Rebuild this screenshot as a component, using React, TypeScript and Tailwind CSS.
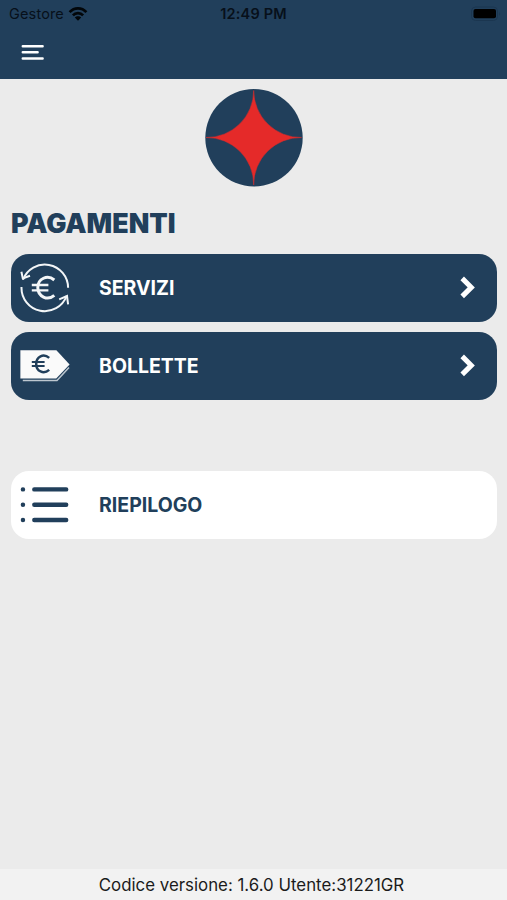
import type { ReactNode } from "react";

function WifiIcon() {
  return (
    <svg className="h-[16px] w-[20px]" viewBox="0 0 20 16" fill="none" stroke="#020609" strokeWidth="2.6">
      <path d="M1.6 6.2C6.2 1.1 13.8 1.1 18.4 6.2" />
      <path d="M4.9 9.4C7.6 6.4 12.4 6.4 15.1 9.4" />
      <path d="M10 14.7 6.8 11.5C8.5 9.8 11.5 9.8 13.2 11.5Z" fill="#020609" stroke="none" />
    </svg>
  );
}

function BatteryIcon() {
  return (
    <svg className="h-[16px] w-[32px]" viewBox="0 0 32 16">
      <rect x="1.5" y="1" width="26" height="13.5" rx="4" fill="none" stroke="#1b3650" />
      <rect x="3.5" y="3" width="22.5" height="9.3" rx="2" fill="#000" />
      <path d="M29.2 5.5Q30.8 7.7 29.2 10Z" fill="#1b3650" />
    </svg>
  );
}

function Logo() {
  return (
    <svg className="h-[98px] w-[98px]" viewBox="0 0 98 98">
      <circle cx="49" cy="48.8" r="48.7" fill="#213f5b" />
      <path
        d="M48.7 1.5A47 47 0 0 0 96.5 48.5A47 47 0 0 0 48.7 96A47 47 0 0 0 1 48.5A47 47 0 0 0 48.7 1.5Z"
        fill="#e52a29"
        stroke="#e52a29"
        strokeWidth="0.5"
      />
    </svg>
  );
}

function ServicesIcon() {
  return (
    <svg className="h-[50px] w-[50px]" viewBox="0 0 50 50" fill="none" stroke="#f3f6f8" strokeWidth="2">
      <path d="M48.1 24.8A23.3 23.3 0 0 0 3 16.6" />
      <path d="M1.5 24A23.3 23.3 0 0 0 46.6 33" />
      <path d="M1.4 8.7 2.8 15.5 10 12.7M39.2 36.3 47 33 48.1 41.3" />
      <path d="M34.3 17C27.5 11.3 17.8 15.5 17.8 24.6S27.5 38.2 34.3 32.4" strokeWidth="3" />
      <path d="M11.8 22H28.4M11.8 27.3H28.4" strokeWidth="2.3" />
    </svg>
  );
}

function BillsIcon() {
  return (
    <svg className="h-[50px] w-[50px]" viewBox="0 0 50 50">
      <path d="M2.8 39.4H37L49 26.6" fill="none" stroke="#bdc7d0" strokeWidth="1.5" />
      <path d="M.4 9.2H36.4L49.6 23.4 36.2 37.6H.4Z" fill="#fafafa" />
      <g fill="none" stroke="#213f5b">
        <path d="M29.2 16.9C23.5 12 16.2 15.6 16.2 22.9S23.5 33.8 29.2 28.9" strokeWidth="2.5" />
        <path d="M11.8 21H24.6M11.8 25H24.6" strokeWidth="1.8" />
      </g>
    </svg>
  );
}

function ListIcon() {
  return (
    <svg className="h-[50px] w-[50px]" viewBox="0 0 50 50" stroke="#213f5b" strokeLinecap="round">
      <path d="M14.3 9.4H46.2M14.3 24.7H46.2M14.3 40H46.2" strokeWidth="4.4" />
      <path d="M2.9 9.4H3M2.9 24.7H3M2.9 40H3" strokeWidth="4.4" />
    </svg>
  );
}

function Chevron() {
  return (
    <svg className="h-[24px] w-[18px]" viewBox="0 0 18 24" fill="none" stroke="#fff" strokeWidth="5">
      <path d="M3.2 2.4 12.3 11.4 3.2 20.4" />
    </svg>
  );
}

type MenuCardProps = { icon: ReactNode; label: string; light?: boolean };

function MenuCard({ icon, label, light = false }: MenuCardProps) {
  return (
    <button
      className={`flex h-[68px] w-full items-center rounded-[18px] pl-[9px] pr-[20px] pt-px text-left ${
        light ? "bg-white text-[#213f5b]" : "bg-[#213f5b] text-white"
      }`}
    >
      {icon}
      <span className="ml-[29px] flex-1 pt-px text-[19.5px] font-bold leading-none">{label}</span>
      {!light && <Chevron />}
    </button>
  );
}

export default function App() {
  return (
    <div className="flex h-[900px] w-[507px] flex-col overflow-hidden bg-[#ebebeb] font-['Inter','Liberation_Sans',sans-serif]">
      <header className="h-[79px] shrink-0 bg-[#213f5b] text-[#07101a]">
        <div className="grid h-[27px] grid-cols-3 items-center pl-[9px] pr-[5px]">
          <div className="flex items-center gap-[4px] text-[14.5px] tracking-[0.15px]">
            Gestore
            <WifiIcon />
          </div>
          <span className="pr-[4px] text-center text-[14.5px] font-semibold tracking-[0.2px]">12:49 PM</span>
          <div className="flex justify-end">
            <BatteryIcon />
          </div>
        </div>
        <button aria-label="Menu" className="ml-[21px] mt-[17px] block">
          <svg className="h-[17px] w-[24px]" viewBox="0 0 24 17" stroke="#fff" strokeWidth="2.5" strokeLinecap="round">
            <path d="M1.8 2.2H21.6M1.8 8.3H16.6M1.8 14.4H21.6" />
          </svg>
        </button>
      </header>
      <main className="flex-1 pl-[11px] pr-[10px] pt-[10px]">
        <div className="flex justify-center">
          <Logo />
        </div>
        <h1 className="mt-[18px] h-[34px] text-[26.8px] font-black leading-[36px] text-[#213f5b]">PAGAMENTI</h1>
        <nav className="mt-[14.5px] flex flex-col gap-[10px]">
          <MenuCard icon={<ServicesIcon />} label="SERVIZI" />
          <MenuCard icon={<BillsIcon />} label="BOLLETTE" />
          <div className="mt-[61px]">
            <MenuCard icon={<ListIcon />} label="RIEPILOGO" light />
          </div>
        </nav>
      </main>
      <footer className="flex h-[31px] shrink-0 items-center justify-center bg-[#f2f2f2] pr-[4px] pt-[2px] text-[16.85px] text-[#1b1b1b]">
        Codice versione: 1.6.0 Utente:31221GR
      </footer>
    </div>
  );
}
